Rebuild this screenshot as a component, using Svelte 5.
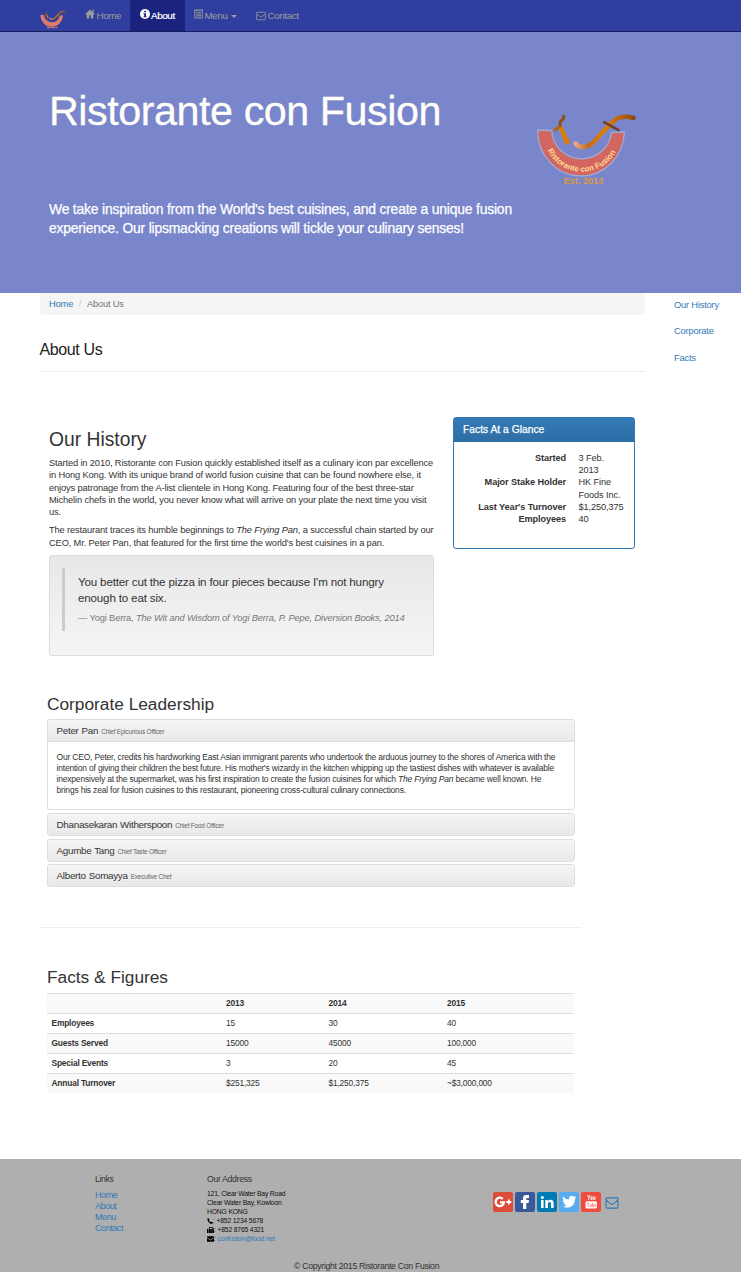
<script>
  const leaders = [
    ['Dhanasekaran Witherspoon', 'Chief Food Officer'],
    ['Agumbe Tang', 'Chief Taste Officer'],
    ['Alberto Somayya', 'Executive Chef']
  ];
  const rows = [
    ['Employees', '15', '30', '40'],
    ['Guests Served', '15000', '45000', '100,000'],
    ['Special Events', '3', '20', '45'],
    ['Annual Turnover', '$251,325', '$1,250,375', '~$3,000,000']
  ];
  const facts = [
    ['Started', '3 Feb. 2013'],
    ['Major Stake Holder', 'HK Fine Foods Inc.'],
    ["Last Year's Turnover", '$1,250,375'],
    ['Employees', '40']
  ];
</script>

{#snippet logo(full)}
  <svg viewBox="0 0 104 76" class="logo" aria-hidden="true">
    <defs>
      <linearGradient id="gold" x1="0" x2="1"><stop offset="0" stop-color="#eba888"/><stop offset=".22" stop-color="#c4681a"/><stop offset=".5" stop-color="#dc8206"/><stop offset=".8" stop-color="#b8620c"/><stop offset="1" stop-color="#8c4b12"/></linearGradient>
    </defs>
    <path d="M1.700 18A43.300 45 0 0 0 88.300 20L75.500 20.500A30 29.500 0 0 1 15.700 18.500Z" fill={full ? '#d36663' : '#e07a68'} stroke="#9faccd" stroke-width={full ? 1.3 : 0}/>
    <path d="M18.500 19Q21 15.500 24 15.500" fill="none" stroke="#b0640b" stroke-width="3"/>
    <path d="M22.300 14.500 26 13.500 34 30Q32.500 33.500 29 32Z" fill="#d67c07"/>
    <path d="M24.500 15Q23 10 26 8 28.500 6.500 27.500 2.800" fill="none" stroke="#8f500f" stroke-width="2.800"/>
    <path d="M39.500 31.500Q44 37 53 33.500 58 30.500 64 23L76 10.500Q84 2 97.500 6" fill="none" stroke="url(#gold)" stroke-width="4.500" stroke-linecap="round"/>
    <path d="M67.300 9.700L83.300 18.700" stroke="#754022" stroke-width="2.600"/>
    {#if full}
      <path id="words" d="M11.500 38.300A38.500 38.500 0 0 0 81.500 36.300" fill="none"/>
      <text class="arc-text"><textPath href="#words">Ristorante con Fusion</textPath></text>
      <text x="27.500" y="71.500" class="est">Est. 2013</text>
    {:else}
      <path d="M27 67H67" stroke="#b5786f" stroke-width="6" stroke-dasharray="14 2"/>
    {/if}
  </svg>
{/snippet}

{#snippet mail()}
  <svg class="mail" viewBox="0 0 16 14" aria-hidden="true"><path d="M1 4.3V12q0 1 1 1h12q1 0 1-1V4.300M1 3V2q0-1 1-1h12q1 0 1 1v1Q13 6 9.500 8 8 9.300 6.500 8 2 5 1 3Z" fill="none" stroke="currentColor" stroke-width="1.300"/></svg>
{/snippet}

<div class="page">
  <nav>
    <a class="brand" href="#home">{@render logo(false)}</a>
    <a class="n1" href="#home"><svg viewBox="0 0 12 11"><path d="M6 0 12 6H10V11H7V7H5V11H2V6H0Z" fill="currentColor"/><path d="M9 0h1.500v4H9z" fill="currentColor"/></svg>Home</a>
    <a class="n2 active" href="#about"><svg viewBox="0 0 12 12"><circle cx="6" cy="6" r="6" fill="currentColor"/><path d="M5 2h2.200v2H5zM4 5h3.200v4H8v1H4V9h1V6H4z" fill="#1a237e"/></svg>About</a>
    <a class="n3" href="#menu"><svg viewBox="0 0 12 12"><path d="M.5.5h11v11H.5zM.5 1.500h11M4 3v7M2 4h1M2 6h1M2 8h1M5 4h5M5 6h5M5 8h5M2 10h1M5 10h5" fill="none" stroke="currentColor"/></svg>Menu<i class="caret"></i></a>
    <a class="n4" href="#contact">{@render mail()}Contact</a>
  </nav>

  <header>
    <div class="hero-text">
      <h1>Ristorante con Fusion</h1>
      <p>We take inspiration from the World's best cuisines, and create a unique fusion<br>experience. Our lipsmacking creations will tickle your culinary senses!</p>
    </div>
    {@render logo(true)}
  </header>

  <main>
    <div class="content">
      <div class="crumb"><a href="#home">Home</a><span class="slash">/</span><span>About Us</span></div>
      <h3 class="title">About Us</h3>

      <div class="top">
        <section class="history" id="history">
          <h2>Our History</h2>
          <p>Started in 2010, Ristorante con Fusion quickly established itself as a culinary icon par excellence<br>in Hong Kong. With its unique brand of world fusion cuisine that can be found nowhere else, it<br>enjoys patronage from the A-list clientele in Hong Kong. Featuring four of the best three-star<br>Michelin chefs in the world, you never know what will arrive on your plate the next time you visit<br>us.</p>
          <p>The restaurant traces its humble beginnings to <em>The Frying Pan</em>, a successful chain started by our<br>CEO, Mr. Peter Pan, that featured for the first time the world's best cuisines in a pan.</p>
          <div class="well">
            <blockquote>
              <div class="quote">You better cut the pizza in four pieces because I'm not hungry<br>enough to eat six.</div>
              <footer>— Yogi Berra, <em>The Wit and Wisdom of Yogi Berra, P. Pepe, Diversion Books, 2014</em></footer>
            </blockquote>
          </div>
        </section>
        <aside class="glance">
          <h4>Facts At a Glance</h4>
          <dl>
            {#each facts as [k, v]}<dt>{k}</dt><dd>{v}</dd>{/each}
          </dl>
        </aside>
      </div>

      <section class="lead" id="corporate">
        <h2>Corporate Leadership</h2>
        <div class="panel open">
          <div class="head">Peter Pan <small>Chief Epicurious Officer</small></div>
          <p>Our CEO, Peter, credits his hardworking East Asian immigrant parents who undertook the arduous journey to the shores of America with the<br>intention of giving their children the best future. His mother's wizardy in the kitchen whipping up the tastiest dishes with whatever is available<br>inexpensively at the supermarket, was his first inspiration to create the fusion cuisines for which <em>The Frying Pan</em> became well known. He<br>brings his zeal for fusion cuisines to this restaurant, pioneering cross-cultural culinary connections.</p>
        </div>
        {#each leaders as [name, role]}
          <div class="panel"><div class="head">{name} <small>{role}</small></div></div>
        {/each}
      </section>

      <section class="figures" id="facts">
        <h2>Facts &amp; Figures</h2>
        <div class="table">
          <div class="row hd"><span></span><span>2013</span><span>2014</span><span>2015</span></div>
          {#each rows as row}
            <div class="row">{#each row as cell}<span>{cell}</span>{/each}</div>
          {/each}
        </div>
      </section>
    </div>
    <div class="side">
      <a href="#history">Our History</a><a href="#corporate">Corporate</a><a href="#facts">Facts</a>
    </div>
  </main>

  <div class="foot">
    <div class="cols">
      <div class="links"><h5>Links</h5><a href="#home">Home</a><a href="#about">About</a><a href="#menu">Menu</a><a href="#contact">Contact</a></div>
      <div class="addr">
        <h5>Our Address</h5>
        <div>121, Clear Water Bay Road</div>
        <div>Clear Water Bay, Kowloon</div>
        <div>HONG KONG</div>
        <div><svg class="ph" viewBox="0 0 12 12"><path d="M1 1 3 0 5 4 4 5Q5 7 7 8L8 7 12 9 11 11Q9 13 5 10 0 6 1 1Z"/></svg>: +852 1234 5678</div>
        <div><svg viewBox="0 0 14 12"><path d="M0 4h3v8H0zM4 0h7l2 2v3h1v7H4z"/><path d="M5.500 1.500h5v3h-5zM6 7h1v1H6zM8.500 7h1v1h-1zM11 7h1v1h-1zM6 9.500h1v1H6zM8.500 9.500h1v1h-1zM11 9.500h1v1h-1z" fill="#afafaf"/></svg>: +852 8765 4321</div>
        <div><svg viewBox="0 0 14 11"><path d="M0 0h14v2L7 7 0 2zM0 3.500 7 8.500 14 3.500V11H0z"/></svg>: <a href="#mail">confusion@food.net</a></div>
      </div>
      <div class="social">
        <b class="g"><svg viewBox="0 0 20 20"><path d="M9.800 6.900A4.200 4.200 0 1 0 11 10.300H7" fill="none" stroke="#fff" stroke-width="2.300"/><path d="M15.800 7.500v5M13.300 10h5" stroke="#fff" stroke-width="1.800"/></svg></b>
        <b class="f"><svg viewBox="0 0 20 20"><path d="M8 17V11H5.800V8H8V6Q8 3 11.300 3H14V6H12.300Q11.300 6 11.300 7V8H14L13.600 11H11.300V17Z" fill="#fff"/></svg></b>
        <b class="l"><svg viewBox="0 0 20 20"><path d="M4 8h2.600v8H4zM8.300 8h2.500v1.200Q12 7.700 13.800 7.800 16.600 8 16.600 11.200V16H14V11.700Q14 10 12.500 10 10.900 10 10.900 11.800V16H8.300z" fill="#fff"/><circle cx="5.300" cy="5.400" r="1.500" fill="#fff"/></svg></b>
        <b class="t"><svg viewBox="0 0 20 20"><path d="M4 4.500Q6.500 7.500 10 7.600 9.700 4 12.800 3.800 14.200 3.800 15 4.700L17 4 15.900 5.800 17.300 5.500 16 6.900Q16 11.500 13 14.100 9 17 3.500 14.500 6 14.500 7.400 13.300 5.300 13 4.700 11.300H6Q3.700 10.500 3.700 8.200L5 8.500Q3.200 7 4 4.500Z" fill="#fff"/></svg></b>
        <b class="y"><svg viewBox="0 0 20 20"><rect x="4.500" y="9.300" width="11.500" height="7.200" rx="1.500" fill="#fff"/><path d="M5.800 11h2.400M7 11.200v4M9 12v2.800h1.300V12M11.500 10.800v4h1.300v-2.500h-1.300M15 14v.8h-1v-2.500h1v1" fill="none" stroke="#f0645c" stroke-width=".6"/><path d="M6.500 3 7.800 5.500 9 3M7.800 5v3M10 4.800h1.200V7.500H10zM12.800 4.500v3h1.200v-3" fill="none" stroke="#fff" stroke-width=".9"/></svg></b>
        <a href="#mail" aria-label="Email">{@render mail()}</a>
      </div>
    </div>
    <div class="copy">© Copyright 2015 Ristorante Con Fusion</div>
  </div>
</div>

<style>
  :global(body) { margin: 0; background: #fff; }
  .page { width: 741px; height: 1272px; overflow: hidden; font-family: "Liberation Sans", Arial, sans-serif; font-size: 9px; color: #333; white-space: nowrap; box-sizing: border-box; }
  .page :global(*) { box-sizing: border-box; }
  h1, h2, h3, h4, h5, p, dl, dd, blockquote { margin: 0; font-weight: 400; }
  a { color: #337ab7; text-decoration: none; }
  svg { display: block; flex: none; }
  nav { height: 32px; background: #303f9f; border-bottom: 1.500px solid #171c5e; display: flex; padding-left: 40px; }
  nav a { color: #9d9d9d; height: 31px; display: flex; align-items: center; font-size: 9.900px; letter-spacing: -.42px; }
  nav a > svg { margin-right: 1.500px; width: 10px; height: 10px; margin-top: -3px; }
  .brand { width: 45px; }
  .brand .logo { width: 27px; height: 20px; margin: 8px 0 0; }
  .n1 { width: 45px; }
  .n2 { width: 55px; padding-left: 9.500px; }
  .n2.active { background: #1a237e; color: #fff; -webkit-text-stroke: .2px #fff; }
  .n3 { width: 71px; padding-left: 9px; }
  .n3 > svg { width: 9px; }
  nav .n4 .mail { width: 10px; margin-top: 0; }
  .caret { border: 3px solid transparent; border-top-color: currentColor; border-bottom: 0; margin-left: 3px; margin-top: 1px; }
  header { height: 261px; background: #7986cb; display: flex; padding: 55px 0 0 49px; color: #fffef8; }
  .hero-text { width: 487px; }
  h1 { font-size: 41.300px; line-height: 48px; letter-spacing: -.46px; -webkit-text-stroke: .3px #fffef8; }
  header p { margin-top: 64.500px; font-size: 13.900px; line-height: 19.500px; letter-spacing: -.19px; color: #fff; -webkit-text-stroke: .25px #fff; }
  header .logo { width: 104px; height: 76px; margin-top: 25px; overflow: visible; }
  .arc-text { font-size: 7.900px; font-weight: 700; fill: #ffdc91; }
  .est { font-size: 9.200px; font-weight: 700; fill: #df993c; }
  main { display: flex; height: 866px; padding-left: 40px; }
  .content { width: 605px; }
  .crumb { height: 22px; background: #f5f5f5; border-radius: 0 0 3px 3px; padding-left: 9px; line-height: 22px; font-size: 9.400px; letter-spacing: -.22px; color: #777; }
  .slash { color: #ccc; margin: 0 5.700px; }
  .title { height: 57px; padding-top: 24px; font-size: 16px; line-height: 22px; letter-spacing: -.38px; border-bottom: 1px solid #eee; color: #222; text-indent: -.5px; }
  .side { margin-left: 29px; padding-top: 5px; font-size: 9.400px; letter-spacing: -.22px; }
  .side a { display: block; line-height: 13px; margin-bottom: 13.400px; }
  .top { display: flex; height: 313px; padding: 45px 10px 0 9px; }
  .history { width: 385px; padding-top: 12px; }
  h2 { font-size: 19.300px; line-height: 22px; }
  .history p { margin: 6px 0 0; font-size: 9.300px; line-height: 12.300px; letter-spacing: -.14px; }
  .well { height: 101px; margin-top: 6px; border: 1px solid #dcdcdc; border-radius: 3px; background: linear-gradient(#e8e8e8, #f5f5f5); padding: 12px; }
  blockquote { border-left: 3px solid #ccc; height: 63px; padding: 6px 0 0 13px; }
  .quote { font-size: 11.600px; line-height: 15.500px; letter-spacing: -.17px; }
  blockquote footer { color: #777; font-size: 9.300px; margin-top: 7px; line-height: 12px; letter-spacing: -.14px; }
  .glance { width: 182px; height: 132px; margin-left: 19px; border: 1px solid #337ab7; border-radius: 3px; }
  h4 { height: 24px; background: linear-gradient(#337ab7, #2e6da4); color: #fff; font-size: 10.300px; line-height: 23px; padding-left: 9px; -webkit-text-stroke: .25px #fff; }
  dl { display: grid; grid-template-columns: 112px 46px; column-gap: 12.500px; padding-top: 9.500px; line-height: 12.350px; font-size: 9.200px; letter-spacing: -.1px; }
  dt { text-align: right; font-weight: 700; }
  dd { white-space: normal; }
  .lead { margin-left: 7px; width: 528px; padding-top: 7px; height: 242px; }
  .lead h2 { font-size: 17.300px; line-height: 24px; margin-bottom: 3px; }
  .panel { border: 1px solid #ddd; border-radius: 3px; height: 23px; margin-bottom: 2.500px; overflow: hidden; }
  .head { height: 22px; background: linear-gradient(#f5f5f5, #e8e8e8); padding-left: 8.500px; font-size: 9.800px; line-height: 21px; letter-spacing: -.26px; word-spacing: .5px; }
  .head small { font-size: 6.500px; color: #666; letter-spacing: -.22px; word-spacing: 0; }
  .open { height: 91px; margin-bottom: 3px; }
  .open .head { border-bottom: 1px solid #ddd; }
  .open p { padding: 10px 8.500px; font-size: 8.500px; line-height: 11px; letter-spacing: -.195px; }
  .figures { width: 542px; border-top: 1px solid #eee; padding: 37px 8px 0 7px; }
  .figures h2 { font-size: 17.300px; line-height: 24px; margin-bottom: 4px; }
  .row { display: grid; grid-template-columns: 174.500px 102.500px 118.500px 1fr; height: 20px; line-height: 19px; border-top: 1px solid #ddd; padding-left: 4.500px; font-size: 8.400px; letter-spacing: -.18px; }
  .row:nth-child(odd) { background: #f9f9f9; }
  .row span:first-child, .hd { font-weight: 700; }
  .foot { height: 113px; background: #afafaf; }
  .cols { display: flex; padding: 15px 0 0 95px; height: 101px; }
  h5 { font-size: 8.700px; line-height: 11px; margin-bottom: 5px; letter-spacing: -.33px; }
  .links { width: 112px; font-size: 9.100px; line-height: 11px; letter-spacing: -.48px; }
  .links h5 { letter-spacing: -.33px; }
  .links a { display: block; }
  .addr { width: 286px; font-size: 6.800px; line-height: 9px; letter-spacing: -.18px; color: #111; }
  .addr h5 { color: #333; margin-bottom: 4px; letter-spacing: -.33px; }
  .addr div { display: flex; white-space: pre; align-items: center; }
  .addr svg { height: 6px; width: 7px; }
  .addr .ph { width: 6px; }
  .social { display: flex; gap: 2px; padding-top: 18px; }
  .social b { width: 20px; height: 20px; border-radius: 2px; }
  .g { background: #dd4b39; } .f { background: #3b5998; } .l { background: #007bb6; } .t { background: #55acee; } .y { background: #f04b40; }
  .social .mail { width: 14px; height: 12px; margin: 5px 0 0 2px; }
  .copy { padding-left: 294px; font-size: 8.700px; line-height: 12px; letter-spacing: -.3px; }
</style>
